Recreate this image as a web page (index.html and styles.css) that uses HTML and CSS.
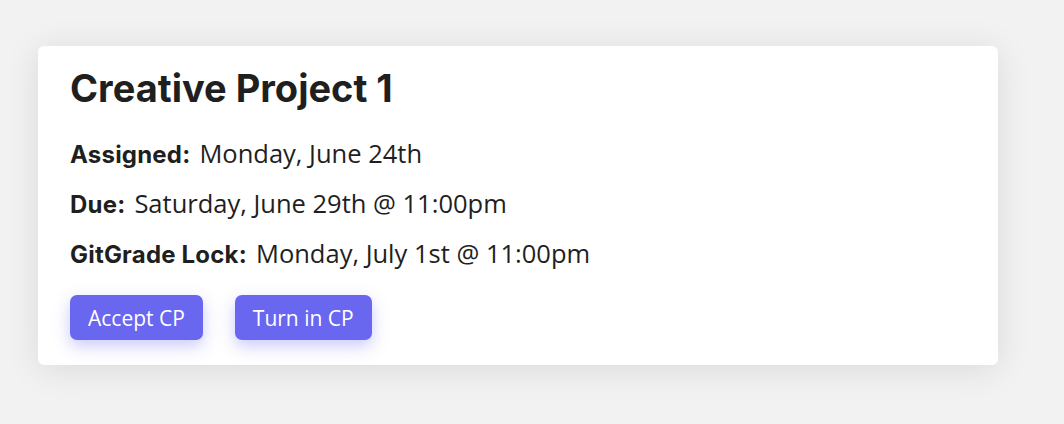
FILE: index.html
```html
<!DOCTYPE html>
<html>
<head>
<meta charset="utf-8">
<link rel="stylesheet" href="styles.css">
</head>
<body>
<div class="page">
  <div class="card">
    <h1 class="title">Creative Project 1</h1>
    <div class="row"><span class="label">Assigned:</span><span class="value">Monday, June 24th</span></div>
    <div class="row"><span class="label">Due:</span><span class="value">Saturday, June 29th @ 11:00pm</span></div>
    <div class="row"><span class="label">GitGrade Lock:</span><span class="value">Monday, July 1st @ 11:00pm</span></div>
    <div class="actions">
      <button class="btn">Accept CP</button>
      <button class="btn">Turn in CP</button>
    </div>
  </div>
</div>
</body>
</html>
```
FILE: styles.css
```css
html, body { margin: 0; padding: 0; }
body { background: #f2f2f2; width: 1064px; height: 424px; overflow: hidden; }
.page { padding: 46px 66px 0 38px; }
.card {
  background: #fff;
  border-radius: 6px;
  box-shadow: 0 4px 34px rgba(0,0,0,0.10);
  padding: 20px 32px 24px 32px;
  height: 319px;
  box-sizing: border-box;
}
.title {
  margin: 0 0 18px 0;
  font-family: "Inter", sans-serif;
  font-weight: 700;
  font-size: 38px;
  line-height: 44px;
  color: #1f1f1f;
}
.row {
  display: flex;
  align-items: baseline;
  gap: 9px;
  height: 50px;
  line-height: 50px;
}
.label {
  font-family: "Inter", sans-serif;
  font-weight: 700;
  font-size: 24px;
  letter-spacing: 0.2px;
  color: #1f1f1f;
}
.value {
  font-family: "Open Sans", sans-serif;
  font-size: 25.5px;
  color: #1f1f1f;
}
.actions { display: flex; gap: 32px; margin-top: 17px; }
.btn {
  font-family: "Open Sans", sans-serif;
  font-size: 21px;
  color: #fff;
  background: #6966f0;
  border: none;
  border-radius: 7px;
  height: 45px;
  padding: 0 18px;
  box-shadow: 0 6px 16px rgba(99,102,241,0.35);
}
```
